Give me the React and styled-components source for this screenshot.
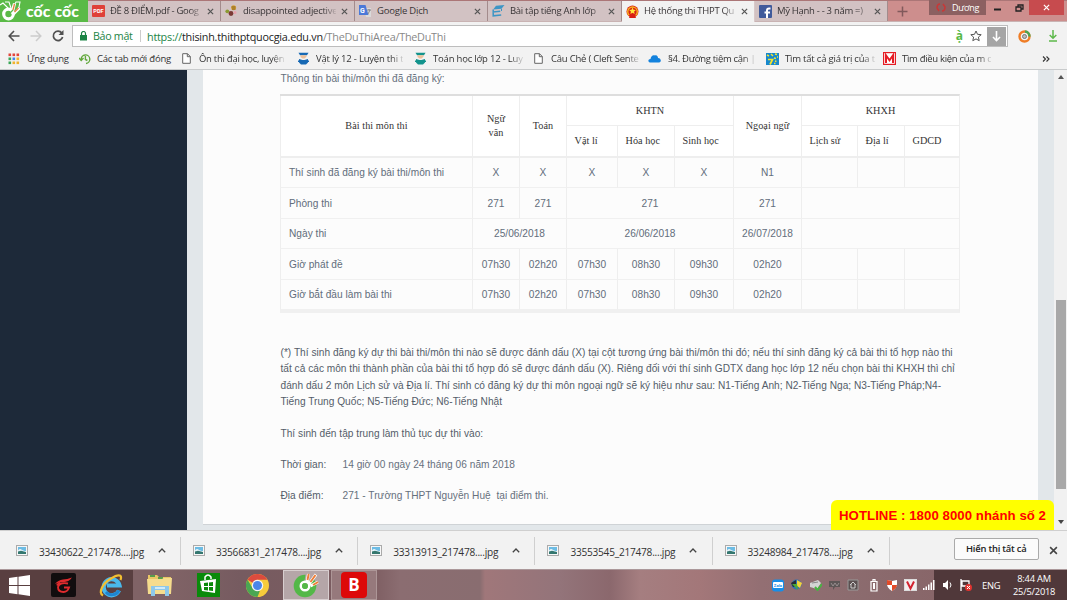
import React from 'react';
import styled, { createGlobalStyle, css } from 'styled-components';

const Global = createGlobalStyle`
  * { box-sizing: border-box; }
  html, body { margin: 0; padding: 0; overflow: hidden; }
  svg { display: block; flex: none; }
`;

const ui = `"Open Sans", "Noto Sans", sans-serif`;
const fade = css`
  -webkit-mask-image: linear-gradient(90deg, #000 86%, rgba(0, 0, 0, 0.15));
  mask-image: linear-gradient(90deg, #000 86%, rgba(0, 0, 0, 0.15));
`;

const Screen = styled.div`
  width: 1067px;
  height: 600px;
  display: flex;
  flex-direction: column;
  overflow: hidden;
  background: #f2f2f2;
  font-family: ${ui};
  font-size: 9.5px;
  color: #333;
  white-space: nowrap;
`;

/* Window frame and tabs */
const TabStrip = styled.header`
  height: 22px;
  flex: none;
  display: flex;
  align-items: flex-start;
  background: #cd8e8d;
  border-top: 1px solid #ab7677;
  border-bottom: 1px solid #c9b3b3;
`;
const Brand = styled.div`
  width: 88px;
  height: 22px;
  margin-top: -1px;
  display: flex;
  align-items: center;
  gap: 4px;
  background: #5aba47;
  color: #fff;
  font: 900 15.8px/20px Lato, "Open Sans", sans-serif;
  letter-spacing: 0.1px;
`;
const Tab = styled.div`
  width: ${(p) => p.$w}px;
  height: ${(p) => (p.$active ? 21 : 20)}px;
  display: flex;
  align-items: center;
  padding: 0 6px ${(p) => (p.$active ? 1 : 0)}px 4px;
  gap: 5px;
  background: ${(p) => (p.$active ? '#f2f2f2' : '#d2c2c3')};
  border-right: 1px solid ${(p) => (p.$active ? '#d9c9c9' : '#a38b8c')};
  color: #383436;
`;
const TabTitle = styled.span`
  flex: 1;
  min-width: 0;
  line-height: 16px;
  letter-spacing: ${(p) => p.$ls ?? -0.2}px;
  ${(p) => p.$fade && fade}
`;
const NewTab = styled.div`
  width: 41px;
  height: 20px;
  display: grid;
  place-items: center;
  padding-right: 13px;
`;
const UserBadge = styled.div`
  width: 57px;
  height: 15px;
  margin-top: -1px;
  display: flex;
  align-items: center;
  gap: 6px;
  padding-left: 7px;
  background: #8c6061;
  color: #fff;
  font-size: 9px;
  letter-spacing: -0.25px;
`;
const WindowButton = styled.div`
  width: ${(p) => p.$w}px;
  height: 15px;
  margin-top: -1px;
  display: grid;
  place-items: center;
  background: ${(p) => (p.$close ? '#c74b4e' : 'transparent')};
`;

/* Toolbar */
const Toolbar = styled.div`
  height: 26px;
  flex: none;
  display: flex;
  align-items: center;
  padding: 2px 10px 0 8px;
`;
const NavIcons = styled.div`
  width: 64px;
  display: flex;
  align-items: center;
  gap: 10px;
`;
const Omnibox = styled.div`
  width: 936px;
  height: 22px;
  display: flex;
  align-items: center;
  padding-left: 7px;
  background: #fff;
  border: 1px solid #bdbdbd;
`;
const Secure = styled.span`
  width: 48px;
  margin-left: 6px;
  color: #1b8445;
  font-size: 10.7px;
  letter-spacing: -0.3px;
  line-height: 12px;
  border-right: 1px solid #ccc;
`;
const Url = styled.span`
  flex: 1;
  margin-left: 6px;
  font-size: 10.8px;
  letter-spacing: -0.235px;
  color: #888;
  b { font-weight: 400; color: #222; }
  i { font-style: normal; color: #1b8445; }
`;
const OmniActions = styled.div`
  display: flex;
  align-items: center;
  gap: 7px;
  color: #58b947;
  font-size: 12px;
  font-weight: 700;
  line-height: 18px;
`;
const SaveBox = styled.span`
  width: 19px;
  height: 19px;
  margin: 0 1px 0 -2px;
  display: grid;
  place-items: center;
  background: #a5a5a5;
`;
const Extensions = styled.div`
  flex: 1;
  display: flex;
  justify-content: space-between;
  padding-left: 10px;
`;

/* Bookmarks */
const Bookmarks = styled.nav`
  height: 22px;
  flex: none;
  display: flex;
  align-items: center;
  padding-left: 8px;
  border-bottom: 1px solid #c9cbcc;
`;
const Bookmark = styled.div`
  width: ${(p) => p.$w}px;
  height: 20px;
  display: flex;
  align-items: center;
  gap: ${(p) => p.$gap || 7}px;
  color: #333;
`;
const BookmarkLabel = styled.span`
  line-height: 16px;
  letter-spacing: ${(p) => p.$ls ?? -0.2}px;
  ${(p) => p.$fade && fade}
`;

/* Page */
const Page = styled.main`
  position: relative;
  height: 460px;
  flex: none;
  display: flex;
  background: #e2e7ea;
  font-family: "Liberation Sans", Arial, sans-serif;
  font-size: 10.15px;
  letter-spacing: 0.025px;
`;
const Sidebar = styled.aside`
  width: 187px;
  background: #1d2939;
`;
const Panel = styled.section`
  width: 835px;
  height: 455px;
  margin-left: 16px;
  padding: 1px 78px 0 77.500px;
  background: #fcfcfc;
  border-bottom: 1px solid #cfd3d6;
  color: #545d69;
`;
const Intro = styled.p`
  margin: 0 0 7px;
  line-height: 16px;
  color: #66707d;
`;
const Grid = styled.div`
  display: grid;
  width: 680px;
  margin-left: -0.5px;
  grid-template-columns: 192px 47px 47px 51px 57px 59px 68px 56px 47px 55px;
  grid-template-rows: 30px 32px 30px 31px 30px 31px 30px;
  border-top: 2px solid #dedede;
  border-bottom: 3px solid #f0f0f0;
  border-right: 1px solid #eeeeee;
`;
const Cell = styled.div`
  grid-column: span ${(p) => p.$c || 1};
  grid-row: span ${(p) => p.$r || 1};
  display: flex;
  align-items: center;
  justify-content: ${(p) => (p.$left ? 'flex-start' : 'center')};
  padding: 0 8px;
  text-align: center;
  border-left: 1px solid #eeeeee;
  color: #626d7b;
`;
const BodyCell = styled(Cell)`
  border-bottom: 1px solid #f0f0f0;
`;
const HeadCell = styled(Cell)`
  padding-left: ${(p) => (p.$left ? 7.5 : 8)}px;
  background: #fff;
  color: #333;
  font-family: "Liberation Serif", "Times New Roman", serif;
  font-size: 10.2px;
  line-height: 14px;
  letter-spacing: ${(p) => (p.$left ? 0.03 : 0.06)}px;
  border-bottom: ${(p) => (p.$group ? 1 : 2)}px solid #eeeeee;
`;
const Note = styled.div`
  margin-top: 32px;
  line-height: 16.45px;
`;
const NoteLine = styled.div`
  letter-spacing: ${(p) => p.$ls || 0}px;
`;
const Detail = styled.div`
  margin-top: 15px;
  height: 16px;
  line-height: 16px;
  display: flex;
`;
const DetailKey = styled.span`
  width: 62px;
`;
const DetailValue = styled.span`
  color: #66707d;
  white-space: pre;
`;
const Scrollbar = styled.div`
  width: 13px;
  margin-left: 16px;
  display: flex;
  flex-direction: column;
  align-items: center;
  background: #f1f1f1;
  padding: 5px 0 4px;
`;
const Thumb = styled.div`
  width: 10px;
  height: 189px;
  margin: 221px 0 31px;
  background: #a8a8a8;
`;
const Hotline = styled.div`
  position: absolute;
  right: 13px;
  bottom: 0;
  width: 223px;
  height: 30px;
  padding-left: 8px;
  border-radius: 6px 6px 0 0;
  background: #ff0;
  color: #f00;
  font-size: 13.2px;
  font-weight: 700;
  line-height: 32px;
  letter-spacing: 0.06px;
`;

/* Downloads */
const Downloads = styled.div`
  height: 39px;
  flex: none;
  display: flex;
  align-items: center;
  border-top: 1px solid #cfcfcf;
  padding-top: 1px;
`;
const Download = styled.div`
  width: ${(p) => (p.$first ? 181 : 177.2)}px;
  height: 28px;
  display: flex;
  align-items: center;
  padding-left: ${(p) => (p.$first ? 16 : 12)}px;
  border-right: 1px solid #cfcfcf;
`;
const FileName = styled.span`
  width: 119px;
  margin-left: 11px;
  font-size: 10.1px;
  letter-spacing: -0.23px;
  padding-top: 2px;
`;
const ShowAll = styled.button`
  width: 85px;
  height: 22px;
  margin: -3px 10px 0 64px;
  padding: 0;
  border: 1px solid #aaa;
  border-radius: 2px;
  background: #fbfbfb;
  color: #222;
  font: 600 9.4px/18px ${ui};
  letter-spacing: -0.2px;
`;

/* Taskbar */
const Taskbar = styled.footer`
  height: 31px;
  flex: none;
  display: flex;
  align-items: center;
  border-top: 1px solid #ab989a;
  background: linear-gradient(90deg, #593f40 0 133px, #806366 133px 170px, #765b60 240px, #7c5c60 370px, #8b6d71 400px, #896d70 480px, #a0777a 485px, #93747a 560px, #8b686d 610px, #a57e80 640px, #a37779 700px, #936f73 760px, #8c6c6f 850px, #886669 934px, #50383a 934px);
`;
const Task = styled.div`
  width: ${(p) => p.$w}px;
  height: 30px;
  display: grid;
  place-items: center;
  ${(p) => p.$open && css`
    margin-right: 2px;
    border: 1px solid ${p.$active ? '#d8cecf' : '#ad9697'};
    background: ${p.$active ? '#b5a6a8' : '#96797c'};
  `}
`;
const Tray = styled.div`
  width: 200px;
  margin-left: auto;
  display: flex;
  align-items: center;
  justify-content: space-between;
`;
const Language = styled.span`
  width: 41px;
  padding-left: 10px;
  color: #fff;
  font-size: 9.4px;
  letter-spacing: -0.2px;
`;
const Clock = styled.div`
  width: 54px;
  padding-right: 12px;
  color: #fff;
  text-align: center;
  font-size: 9.3px;
  line-height: 13px;
  letter-spacing: -0.2px;
`;

const Close = ({ color = '#555', size = 7 }) => (
  <svg width={size} height={size} viewBox="0 0 8 8"><path d="M1 1l6 6M7 1L1 7" stroke={color} strokeWidth="1.4" /></svg>
);
const BrandMark = () => (
  <svg width="22" height="22" viewBox="0 0 22 22">
    <path d="M0 5l3-2 5 5M5 2h4l2 6M12 9l4-7h4l-1 5-4 5" fill="none" stroke="#fff" strokeWidth="1.100" />
    <circle cx="8.500" cy="14" r="4.800" fill="none" stroke="#fff" strokeWidth="3.200" />
    <path d="M10 13l3-10 3 1-2 8 5-5 1.500 2-6 6z" fill="#fff" />
    <path d="M13 10l1.500-6M14.500 12l4-4" stroke="#e8823f" strokeWidth="1.300" />
    <circle cx="8.500" cy="14" r="2.300" fill="#5aba47" />
    <path d="M10 13l3-3" stroke="#5aba47" strokeWidth="1.200" />
  </svg>
);
const Pdf = () => (
  <svg width="13" height="12" viewBox="0 0 13 12"><rect width="13" height="12" rx="1" fill="#df4038" /><text x="6.5" y="8.3" fontSize="5.6" fontWeight="700" fill="#fff" textAnchor="middle" fontFamily="Roboto">PDF</text></svg>
);
const Bee = () => (
  <svg width="13" height="12" viewBox="0 0 13 12"><circle cx="8.600" cy="2.800" r="2.500" fill="#d9a536" /><path d="M6.500 2h4M7 4h3.500" stroke="#6d4c1c" strokeWidth=".8" /><circle cx="2.300" cy="6.300" r="1.900" fill="#8a9a32" /><circle cx="6" cy="8.500" r="2.400" fill="#7b3a35" /><circle cx="10" cy="7.500" r="1.500" fill="#e9a3ae" /></svg>
);
const Translate = () => (
  <svg width="13" height="12" viewBox="0 0 13 12"><path d="M5 3h7v9H7z" fill="#dadada" /><path d="M0 0h6.500l3 10H0z" fill="#4b79d8" /><text x="1" y="7.500" fontSize="7" fontWeight="700" fill="#fff" fontFamily="Roboto">G</text><path d="M8 5h4M10 4v1M9 9l2-4" stroke="#777" strokeWidth=".8" /></svg>
);
const Books = () => (
  <svg width="13" height="12" viewBox="0 0 13 12"><path d="M4 .8L12.500 0 9.500 3.800 1.200 4.600z" fill="#3c95c5" /><path d="M1.200 4.600V7l7-.8M1.200 7.500v3.300l8-.8" fill="none" stroke="#3c95c5" strokeWidth="1.500" /><path d="M9.500 3.800V6" stroke="#3c95c5" /></svg>
);
const Emblem = () => (
  <svg width="13" height="13" viewBox="0 0 13 13"><circle cx="6.5" cy="6.5" r="6" fill="#d91f14" /><circle cx="6.5" cy="6.8" r="4.8" fill="none" stroke="#f6b321" strokeWidth="1.4" strokeDasharray="24 7" strokeDashoffset="-11" /><path d="M6.500 2.500l1 2.300 2.400.2-1.800 1.600.5 2.400-2.100-1.300L4.400 9l.5-2.400L3.100 5l2.400-.2z" fill="#ffe63b" /><path d="M4 10.500h5l1 2.500H3z" fill="#d91f14" /></svg>
);
const Facebook = () => (
  <svg width="13" height="13" viewBox="0 0 13 13"><rect width="13" height="13" rx="1" fill="#405a9b" /><path d="M8 13V5.500q0-2 2-2h1.500M5.500 7.500h5.500" stroke="#fff" strokeWidth="2" fill="none" /></svg>
);
const FileIcon = () => (
  <svg width="9" height="11" viewBox="0 0 9 11"><path d="M.7.7h4.800l2.800 2.800v6.800H.7zM5.300.7v3h3" fill="#fff" stroke="#666" /></svg>
);
const Student = ({ c }) => (
  <svg width="11" height="13" viewBox="0 0 11 13"><path d="M.5.8h10L9 3.200H2z" fill={c} /><path d="M2.500 3.200h6v1.600l-2 1.700h-2L2.500 5z" fill="#ecc09a" /><path d="M1 7l3.500 1h2L10 7v3.500L8 12.500H3l-2-2z" fill={c} /><path d="M0 8.500h2v1.500H0zM9 8.500h2v1.500H9z" fill={c} /></svg>
);
const Apps = () => (
  <svg width="12" height="12" viewBox="0 0 12 12">
    {['#e2453b', '#e2453b', '#e2453b', '#3aa757', '#4285e8', '#f0b32c', '#3aa757', '#f0b32c', '#f0b32c'].map((c, i) => (
      <rect key={i} x={0.500 + (i % 3) * 4} y={0.500 + Math.floor(i / 3) * 4} width="2.600" height="2.600" fill={c} />
    ))}
  </svg>
);
const History = () => (
  <svg width="12" height="12" viewBox="0 0 12 12" fill="none" stroke="#62a83c" strokeWidth="1.400"><path d="M2.200 6.500A4.300 4.300 0 1 1 7 10.500M0 5l2.200 2.500L4.500 5M6.400 3v3.500l2 1" /></svg>
);
const Cloud = () => (
  <svg width="13" height="9" viewBox="0 0 13 9"><path d="M2 8.500C-.5 8 0 5 2.500 5 3 2 5 .5 7 1.500 9 .8 10 3 10 4c3 0 4 4 1 4.500z" fill="#1382dd" /></svg>
);
const Seven = () => (
  <svg width="13" height="12" viewBox="0 0 13 12"><rect width="13" height="12" fill="#1688cd" /><path d="M2 6.500h4.500L4 11.500" stroke="#f6e52e" strokeWidth="1.700" fill="none" /><path d="M1 2l2 1M5 1l2 2M9 1l2 .5M8 5l2 .5M11 4h1M9 8l1.500 .5M8 10.500h1.500" stroke="#f6e52e" strokeWidth="1.400" /></svg>
);
const MLogo = () => (
  <svg width="13" height="13" viewBox="0 0 13 13"><rect x=".6" y=".6" width="11.800" height="11.800" fill="#fff" stroke="#e51b23" strokeWidth="1.200" /><path d="M3 11V3.300l3.500 5 3.500-5V11" stroke="#e51b23" strokeWidth="2" fill="none" /></svg>
);
const Picture = () => (
  <svg width="12" height="11" viewBox="0 0 12 11"><rect x=".5" y=".5" width="11" height="10" fill="#f7f7f7" stroke="#aaa" /><path d="M2 2h8v4H2z" fill="#6dbce4" /><path d="M2 5.500q2-2.500 4-.5l4 1.500V7H2z" fill="#e9f5fa" /><path d="M2 6.500l3-.8L10 7v2H2z" fill="#34776f" /></svg>
);
const Chevron = () => (
  <svg width="8" height="5" viewBox="0 0 8 5"><path d="M.8 4.300L4 1l3.200 3.300" fill="none" stroke="#444" strokeWidth="1.300" /></svg>
);

const Windows = () => (
  <svg width="21" height="21" viewBox="0 0 21 21" fill="#fff"><path d="M0 3l8.500-1.200v8.200H0zM9.500 1.700L21 0v10H9.500zM0 11h8.500v8.200L0 18zM9.500 11H21v10L9.500 19.300z" /></svg>
);
const Garena = () => (
  <svg width="25" height="24" viewBox="0 0 25 24"><rect width="25" height="24" rx="2" fill="#110d0e" /><path d="M21 4.500q-5 2-9 2-5 .5-8 4.500 4-2 8-1.800 6-.2 9-4.700z" fill="#e02b2e" /><path d="M17 10.500q-8-1.500-10 3.500 0 5 5.500 5 4 0 5.500-4.500h-5M9 9.500q-2 1-3 3" fill="none" stroke="#e02b2e" strokeWidth="1.900" /></svg>
);
const Explorer = () => (
  <svg width="25" height="25" viewBox="0 0 25 25"><path d="M20 17.500A8 8 0 1 1 20.500 12.500H8" fill="none" stroke="#4ab9ec" strokeWidth="4.200" /><path d="M20 17.500A8 8 0 0 1 7 19" fill="none" stroke="#1e85cf" strokeWidth="3" /><path d="M4 22.500C-1.500 20 4 10 12 5.500 18 1.500 24 .5 21.500 7" fill="none" stroke="#f2bf32" strokeWidth="2.200" /></svg>
);
const Folder = () => (
  <svg width="26" height="24" viewBox="0 0 26 24"><path d="M1 2h9l2 2h12v15H1z" fill="#e9c765" /><path d="M3 3h5M11 5h5M19 7h4" stroke="#579d4c" strokeWidth="2" /><path d="M0 6h15l2-1h8l-1 16H1z" fill="#f5dc8d" /><path d="M6 23v-8h14v8" fill="none" stroke="#8dc8ea" strokeWidth="4" /><path d="M8 15h10" stroke="#cfebf8" strokeWidth="2" /></svg>
);
const Store = () => (
  <svg width="23" height="24" viewBox="0 0 23 24"><rect width="23" height="24" fill="#0a8a0a" /><path d="M3 8l16-2-1 14-13-2z" fill="#fff" /><path d="M8 7V4q3-4 6 0v2" fill="none" stroke="#fff" strokeWidth="1.500" /><path d="M7 10l4-.4v3.400H7zM12 9.400l4-.5V13h-4zM7 14h4v3.500L7 17zM12 14h4v4l-4-.5z" fill="#0a8a0a" /></svg>
);
const Chrome = () => (
  <svg width="23" height="23" viewBox="0 0 24 24"><circle cx="12" cy="12" r="12" fill="#f7cb3b" /><path d="M12 12L1.600 6A12 12 0 0 1 22.400 6H12z" fill="#dc4b3e" /><path d="M12 24A12 12 0 0 1 1.600 6l5.600 9L12 17.500h2.500z" fill="#4aa753" /><circle cx="12" cy="12" r="6" fill="#f5f5f5" /><circle cx="12" cy="12" r="4.700" fill="#4a86e8" /></svg>
);
const CocCoc = () => (
  <svg width="26" height="26" viewBox="0 0 26 26"><circle cx="12" cy="14" r="11.300" fill="#54b848" /><path d="M11 12L13 0h13v13z" fill="#b5a6a8" /><path d="M20.500 6.500A11.300 11.300 0 0 1 23.300 14L16 14z" fill="#54b848" /><circle cx="12" cy="14" r="4.200" fill="none" stroke="#fff" strokeWidth="2.600" /><circle cx="12" cy="14" r="2.900" fill="#54b848" /><path d="M14 10.500L15.500 2M16 12l7-9.500M17.500 14l7.500-4" stroke="#fff" strokeWidth="3" /><path d="M14.500 8l1.200-6M17.500 10l5-7M20 13l5-3" stroke="#ef7d35" strokeWidth="1.900" /></svg>
);
const BitDefender = () => (
  <svg width="26" height="26" viewBox="0 0 26 26"><rect width="26" height="26" rx="4" fill="#dd0909" /><text x="13" y="19" fontSize="17" fontWeight="700" fill="#fff" textAnchor="middle" fontFamily="Open Sans">B</text></svg>
);

const TrayIcons = () => (
  <>
    <svg width="12" height="13" viewBox="0 0 12 13"><rect y=".5" width="12" height="12" rx="3" fill="#178ee8" /><rect x="1" y="3" width="10" height="6" rx="1" fill="#fff" /><text x="6" y="7.800" fontSize="4.200" fontWeight="700" fill="#178ee8" textAnchor="middle" fontFamily="Roboto">Zalo</text></svg>
    <svg width="13" height="12" viewBox="0 0 13 12"><circle cx="6.500" cy="5.500" r="5" fill="#2f72b4" /><path d="M1 4l5-3v6L3 8z" fill="#252b34" /><path d="M7 1l5 3-2 5-3-2z" fill="#f3d33b" /><path d="M2 5h5l1 6z" fill="#4eaa35" /></svg>
    <svg width="13" height="12" viewBox="0 0 13 12"><path d="M1 4l8-3 3 3-4 6-7-2z" fill="#d4d4d4" /><path d="M3 4l6-1" stroke="#888" /><path d="M6 8l2.500 3L13 5" fill="none" stroke="#46b541" strokeWidth="2" /></svg>
    <svg width="13" height="12" viewBox="0 0 13 12"><path d="M1 2h11v6H7l-2 3V8H1z" fill="#5d5656" /><path d="M3 4l2 3 2-3 2 3 2-3" stroke="#988e8f" fill="none" /></svg>
    <svg width="12" height="12" viewBox="0 0 12 12" fill="none" stroke="#ccc"><path d="M1 1h10v10H1z" fill="#5b5051" stroke="#999" /><path d="M3 6l3-3 3 3M4 5v4h4V5" /></svg>
    <svg width="14" height="13" viewBox="-5 0 14 13"><path d="M1 2.500h6V12H1zM3 2V.5h2V2" fill="none" stroke="#fff" strokeWidth="1.200" /><path d="M3 4h2v6H3z" fill="#fff" /></svg>
    <svg width="12" height="12" viewBox="0 0 12 12"><path d="M1 1l5 1 5-1v4q0 4-5 7-5-3-5-7z" fill="#fff" /><path d="M1 1l5 1v4H1zM6 6h5q0 3-5 6z" fill="#e34a28" /></svg>
    <svg width="13" height="12" viewBox="0 0 13 12"><rect x=".5" y=".5" width="12" height="11" fill="#f4eeee" stroke="#ddd" /><path d="M3 2.500l3.500 7 3.500-7" stroke="#d32330" strokeWidth="2" fill="none" /></svg>
    <svg width="12" height="10" viewBox="0 0 12 10" fill="#fff"><path d="M0 8h1.500v2H0zM2.500 6.500H4V10H2.500zM5 4.500h1.500V10H5zM7.500 2.500H9V10H7.500zM10 0h1.500v10H10z" /></svg>
    <svg width="13" height="12" viewBox="-2 0 13 12"><path d="M0 4h2l3-3v10L2 8H0z" fill="#fff" /><path d="M7 3.500q2 2.500 0 5" stroke="#fff" fill="none" /></svg>
    <svg width="12" height="12" viewBox="0 0 12 12"><path d="M1 0v12M2 2h7v5H2z" stroke="#fff" fill="none" strokeWidth="1.300" /><circle cx="8.500" cy="8.500" r="3.500" fill="#e23430" /><path d="M7 7l3 3M10 7l-3 3" stroke="#fff" /></svg>
  </>
);

const tabs = [
  { w: 133, icon: <Pdf />, title: 'ĐỀ 8 ĐIỂM.pdf - Goog', fade: true, ls: -0.3 },
  { w: 134, icon: <Bee />, title: 'disappointed adjective', fade: true, ls: -0.25 },
  { w: 133, icon: <Translate />, title: 'Google Dịch' },
  { w: 134, icon: <Books />, title: 'Bài tập tiếng Anh lớp', fade: true, ls: -0.3 },
  { w: 133, icon: <Emblem />, title: 'Hệ thống thi THPT Qu', fade: true, ls: -0.3, active: true },
  { w: 133, icon: <Facebook />, title: 'Mỹ Hạnh - - 3 năm =)', fade: true, ls: -0.3 },
];
const bookmarks = [
  { w: 71, icon: <Apps />, label: 'Ứng dụng' },
  { w: 103, icon: <History />, label: 'Các tab mới đóng', gap: 6 },
  { w: 116, icon: <FileIcon />, label: 'Ôn thi đại học, luyện', fade: true, gap: 8, ls: -0.27 },
  { w: 117, icon: <Student c="#1769b4" />, label: 'Vật lý 12 - Luyện thi t', fade: true },
  { w: 119, icon: <Student c="#12938c" />, label: 'Toán học lớp 12 - Luy', fade: true },
  { w: 114, icon: <FileIcon />, label: 'Câu Chẻ ( Cleft Sente', fade: true, gap: 8, ls: -0.22 },
  { w: 118, icon: <Cloud />, label: '§4. Đường tiệm cận |', fade: true, ls: -0.3 },
  { w: 117, icon: <Seven />, label: 'Tìm tất cả giá trị của t', fade: true, gap: 6 },
  { w: 159, icon: <MLogo />, label: 'Tìm điều kiện của m c', fade: true, gap: 6, ls: -0.3 },
];
const downloads = ['33430622', '33566831', '33313913', '33553545', '33248984'];
const rows = [
  ['Thí sinh đã đăng ký bài thi/môn thi', ['X'], ['X'], ['X'], ['X'], ['X'], ['N1'], [''], [''], ['']],
  ['Phòng thi', ['271'], ['271'], ['271', 3], ['271'], ['', 3]],
  ['Ngày thi', ['25/06/2018', 2], ['26/06/2018', 3], ['26/07/2018'], ['', 3]],
  ['Giờ phát đề', ['07h30'], ['02h20'], ['07h30'], ['08h30'], ['09h30'], ['02h20'], [''], [''], ['']],
  ['Giờ bắt đầu làm bài thi', ['07h30'], ['02h20'], ['07h30'], ['08h30'], ['09h30'], ['02h20'], [''], [''], ['']],
];
const note = [
  ['(*) Thí sinh đăng ký dự thi bài thi/môn thi nào sẽ được đánh dấu (X) tại cột tương ứng bài thi/môn thi đó; nếu thí sinh đăng ký cả bài thi tổ hợp nào thi', 0.018],
  ['tất cả các môn thi thành phần của bài thi tổ hợp đó sẽ được đánh dấu (X). Riêng đối với thí sinh GDTX đang học lớp 12 nếu chọn bài thi KHXH thì chỉ', 0.012],
  ['đánh dấu 2 môn Lịch sử và Địa lí. Thí sinh có đăng ký dự thi môn ngoại ngữ sẽ ký hiệu như sau: N1-Tiếng Anh; N2-Tiếng Nga; N3-Tiếng Pháp;N4-', 0.02],
  ['Tiếng Trung Quốc; N5-Tiếng Đức; N6-Tiếng Nhật', 0.02],
];
const tasks = [
  { w: 39, icon: <Windows /> },
  { w: 48, icon: <Garena /> },
  { w: 48, icon: <Explorer /> },
  { w: 50, icon: <Folder /> },
  { w: 47, icon: <Store /> },
  { w: 51, icon: <Chrome /> },
  { w: 46, icon: <CocCoc />, open: true, active: true },
  { w: 46, icon: <BitDefender />, open: true },
];

export default function App() {
  return (
    <Screen>
      <Global />
      <TabStrip>
        <Brand><BrandMark />cốc cốc</Brand>
        {tabs.map((t) => (
          <Tab key={t.title} $w={t.w} $active={t.active}>
            {t.icon}
            <TabTitle $fade={t.fade} $ls={t.ls}>{t.title}</TabTitle>
            <Close />
          </Tab>
        ))}
        <NewTab>
          <svg width="11" height="11" viewBox="0 0 11 11"><path d="M5.500 .5v10M.5 5.500h10" stroke="#81595b" strokeWidth="1.500" /></svg>
        </NewTab>
        <UserBadge>
          <svg width="10" height="9" viewBox="0 0 10 9" fill="none" stroke="#c93737" strokeWidth="1.500"><path d="M4 1Q1 1 1 5l2 3M6 8q3 0 3-4L7 1" /></svg>
          Dương
        </UserBadge>
        <WindowButton $w={23}><svg width="7" height="7"><path d="M0 5.500h7" stroke="#222" strokeWidth="2" /></svg></WindowButton>
        <WindowButton $w={20}>
          <svg width="9" height="8" viewBox="0 0 9 8" fill="none" stroke="#222" strokeWidth="1.300"><path d="M1 3h5v4H1zM3 3V1h5v4H6" /></svg>
        </WindowButton>
        <WindowButton $w={35} $close><Close color="#fff" /></WindowButton>
      </TabStrip>

      <Toolbar>
        <NavIcons>
          <svg width="12" height="12" viewBox="0 0 12 12" fill="none" stroke="#505050" strokeWidth="1.600"><path d="M11.500 6H1.500M6 1L1.200 6 6 11" /></svg>
          <svg width="12" height="12" viewBox="0 0 12 12" fill="none" stroke="#ccc" strokeWidth="1.500"><path d="M.5 6h10M6 1l4.800 5L6 11" /></svg>
          <svg width="12" height="12" viewBox="0 0 12 12" fill="none" stroke="#505050" strokeWidth="1.700"><path d="M9.800 3A4.700 4.700 0 1 0 10.600 7" /><path d="M11.500 0v5h-5z" fill="#505050" stroke="none" /></svg>
        </NavIcons>
        <Omnibox>
          <svg width="7" height="10" viewBox="0 0 7 10"><path d="M0 4h7v5.500H0z" fill="#1b8445" /><path d="M1.500 4V2.500a2 2 0 0 1 4 0V4" fill="none" stroke="#1b8445" strokeWidth="1.200" /></svg>
          <Secure>Bảo mật</Secure>
          <Url><i>https://</i><b>thisinh.thithptquocgia.edu.vn</b>/TheDuThiArea/TheDuThi</Url>
          <OmniActions>
            ạ̀
            <svg width="12" height="12" viewBox="0 0 12 12"><path d="M6 1l1.500 3.300 3.700.4-2.800 2.400.8 3.600L6 8.900l-3.200 1.800.8-3.600L.8 4.700l3.700-.4z" fill="none" stroke="#555" /></svg>
            <SaveBox><svg width="9" height="11" viewBox="0 0 9 11"><path d="M4.500 0v9.500M1 6l3.500 3.700L8 6" fill="none" stroke="#fff" strokeWidth="1.600" /></svg></SaveBox>
          </OmniActions>
        </Omnibox>
        <Extensions>
          <svg width="13" height="13" viewBox="0 0 13 13" fill="none"><circle cx="6.500" cy="6.500" r="5" stroke="#ef7d26" strokeWidth="2.400" /><path d="M7 1.500a5 5 0 0 1 4.500 5" stroke="#4ba553" strokeWidth="2.400" /><circle cx="6.500" cy="6.500" r="2" fill="#bbb" stroke="#777" /></svg>
          <svg width="8" height="12" viewBox="0 0 8 12" fill="none" stroke="#5db94b" strokeWidth="1.500"><path d="M4 0v8M.7 5L4 8.300 7.300 5M0 11h8" /></svg>
        </Extensions>
      </Toolbar>

      <Bookmarks>
        {bookmarks.map((b) => (
          <Bookmark key={b.label} $w={b.w} $gap={b.gap}>
            {b.icon}
            <BookmarkLabel $fade={b.fade} $ls={b.ls}>{b.label}</BookmarkLabel>
          </Bookmark>
        ))}
        <svg width="8" height="6" viewBox="0 0 8 6" fill="none" stroke="#333" strokeWidth="1.100"><path d="M1 .5L3.500 3 1 5.500M4.500 .5L7 3 4.500 5.500" /></svg>
      </Bookmarks>

      <Page>
        <Sidebar />
        <Panel>
          <Intro>Thông tin bài thi/môn thi đã đăng ký:</Intro>
          <Grid>
            <HeadCell $r={2}>Bài thi môn thi</HeadCell>
            <HeadCell $r={2}>Ngữ<br />văn</HeadCell>
            <HeadCell $r={2}>Toán</HeadCell>
            <HeadCell $c={3} $group>KHTN</HeadCell>
            <HeadCell $r={2}>Ngoại ngữ</HeadCell>
            <HeadCell $c={3} $group>KHXH</HeadCell>
            {['Vật lí', 'Hóa học', 'Sinh học', 'Lịch sử', 'Địa lí', 'GDCD'].map((s) => <HeadCell key={s} $left>{s}</HeadCell>)}
            {rows.map(([name, ...cells]) => (
              <React.Fragment key={name}>
                <BodyCell $left>{name}</BodyCell>
                {cells.map(([text, span], i) => <BodyCell key={i} $c={span}>{text}</BodyCell>)}
              </React.Fragment>
            ))}
          </Grid>
          <Note>{note.map(([line, ls]) => <NoteLine key={line} $ls={ls}>{line}</NoteLine>)}</Note>
          <Detail>Thí sinh đến tập trung làm thủ tục dự thi vào:</Detail>
          <Detail><DetailKey>Thời gian:</DetailKey><DetailValue>14 giờ 00 ngày 24 tháng 06 năm 2018</DetailValue></Detail>
          <Detail><DetailKey>Địa điểm:</DetailKey><DetailValue>{'271 - Trường THPT Nguyễn Huệ  tại điểm thi.'}</DetailValue></Detail>
        </Panel>
        <Scrollbar>
          <svg width="6" height="4"><path d="M0 4l3-4 3 4z" fill="#555" /></svg>
          <Thumb />
          <svg width="6" height="4"><path d="M0 0h6L3 4z" fill="#444" /></svg>
        </Scrollbar>
        <Hotline>HOTLINE : 1800 8000 nhánh số 2</Hotline>
      </Page>

      <Downloads>
        {downloads.map((id, i) => (
          <Download key={id} $first={i === 0}>
            <Picture /><FileName>{id}_217478....jpg</FileName><Chevron />
          </Download>
        ))}
        <ShowAll>Hiển thị tất cả</ShowAll>
        <Close size={9} color="#444" />
      </Downloads>

      <Taskbar>
        {tasks.map((t, i) => <Task key={i} $w={t.w} $open={t.open} $active={t.active}>{t.icon}</Task>)}
        <Tray><TrayIcons /></Tray>
        <Language>ENG</Language>
        <Clock>8:44 AM<br />25/5/2018</Clock>
      </Taskbar>
    </Screen>
  );
}
